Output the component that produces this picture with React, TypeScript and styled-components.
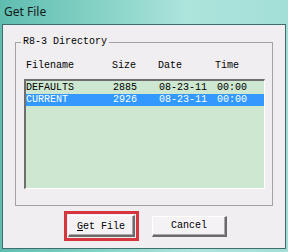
import React from "react";
import styled, { createGlobalStyle } from "styled-components";

const Global = createGlobalStyle`
  html, body { margin: 0; padding: 0; }
  body {
    width: 288px;
    height: 252px;
    overflow: hidden;
    background: linear-gradient(90deg, #5fbdb0 0%, #86d2c6 35%, #ade4dc 65%, #a3dfd6 100%);
  }
`;

const Frame = styled.div`
  width: 288px;
  height: 252px;
  display: flex;
  flex-direction: column;
`;

const TitleBar = styled.div`
  height: 24px;
  padding-left: 4px;
  display: flex;
  align-items: center;
  font-family: "Noto Sans", sans-serif;
  font-size: 12px;
  color: #141c1c;
  box-sizing: border-box;
  padding-bottom: 2px;
`;

const Client = styled.div`
  margin-left: 2px;
  width: 284px;
  height: 225px;
  box-sizing: border-box;
  border: 1px solid #3f6e6c;
  background: #f0eef1;
  display: flex;
  flex-direction: column;
  font-family: "Liberation Mono", monospace;
  font-size: 10px;
  color: #000;
`;

const Group = styled.fieldset`
  margin: 11px 0 0 12px;
  width: 258px;
  height: 170px;
  box-sizing: border-box;
  border: 1px solid #a3a1a4;
  padding: 0;
  min-width: 0;
`;

const Legend = styled.legend`
  margin-left: 5px;
  padding: 0 2px;
  line-height: 12px;
  font-size: 10px;
`;

const GroupBody = styled.div`
  padding: 12px 7px 0 8px;
`;

const Columns = styled.div<{ $pad?: number }>`
  display: grid;
  grid-template-columns: 86px 46px 57px 1fr;
  height: 12px;
  line-height: 12px;
  padding-left: ${(p) => p.$pad ?? 0}px;
  white-space: pre;
`;

const HeaderRow = styled(Columns)`
  padding-left: 2px;
`;

const ListBox = styled.div`
  margin-top: 7px;
  width: 241px;
  height: 110px;
  box-sizing: border-box;
  border-style: solid;
  border-width: 2px 1px 1px 2px;
  border-color: #6e6e6e #ffffff #ffffff #6e6e6e;
  background: #cde7d0;
  padding-top: 1px;
`;

const Row = styled(Columns)<{ $selected?: boolean }>`
  grid-template-columns: 87px 46px 58px 1fr;
  height: 12px;
  background: ${(p) => (p.$selected ? "#3399ff" : "transparent")};
  color: ${(p) => (p.$selected ? "#ffffff" : "#000000")};
`;

const ButtonRow = styled.div`
  display: flex;
  align-items: center;
  gap: 13px;
  margin-top: 5px;
  padding-left: 61px;
  height: 30px;
`;

const Highlight = styled.div`
  width: 75px;
  height: 30px;
  box-sizing: border-box;
  border: 3px solid #d5363d;
  padding: 1px;
  display: flex;
`;

const Button = styled.button<{ $w?: number }>`
  width: ${(p) => p.$w ?? 74}px;
  height: 21px;
  box-sizing: border-box;
  margin: 0;
  padding: 0;
  background: #f4f2f5;
  border-style: solid;
  border-width: 1px 2px 2px 1px;
  border-color: #ffffff #6a6a6a #6a6a6a #ffffff;
  box-shadow: inset -1px -1px 0 #a9a7aa;
  font-family: "Liberation Mono", monospace;
  font-size: 10px;
  color: #000;
  display: flex;
  align-items: center;
  justify-content: center;
`;

const FocusButton = styled(Button)`
  width: 100%;
  height: 100%;
  padding-top: 1px;
`;

const rows = [
  { name: "DEFAULTS", size: "2885", date: "08-23-11", time: "00:00", selected: false },
  { name: "CURRENT", size: "2926", date: "08-23-11", time: "00:00", selected: true },
];

export default function App() {
  return (
    <>
      <Global />
      <Frame>
        <TitleBar>Get File</TitleBar>
        <Client>
          <Group>
            <Legend>R8-3 Directory</Legend>
            <GroupBody>
              <HeaderRow>
                <span>Filename</span>
                <span>Size</span>
                <span>Date</span>
                <span>Time</span>
              </HeaderRow>
              <ListBox>
                {rows.map((r) => (
                  <Row key={r.name} $selected={r.selected}>
                    <span>{r.name}</span>
                    <span>{r.size}</span>
                    <span>{r.date}</span>
                    <span>{r.time}</span>
                  </Row>
                ))}
              </ListBox>
            </GroupBody>
          </Group>
          <ButtonRow>
            <Highlight>
              <FocusButton>
                <span>
                  <u>G</u>et File
                </span>
              </FocusButton>
            </Highlight>
            <Button $w={75}>Cancel</Button>
          </ButtonRow>
        </Client>
      </Frame>
    </>
  );
}
